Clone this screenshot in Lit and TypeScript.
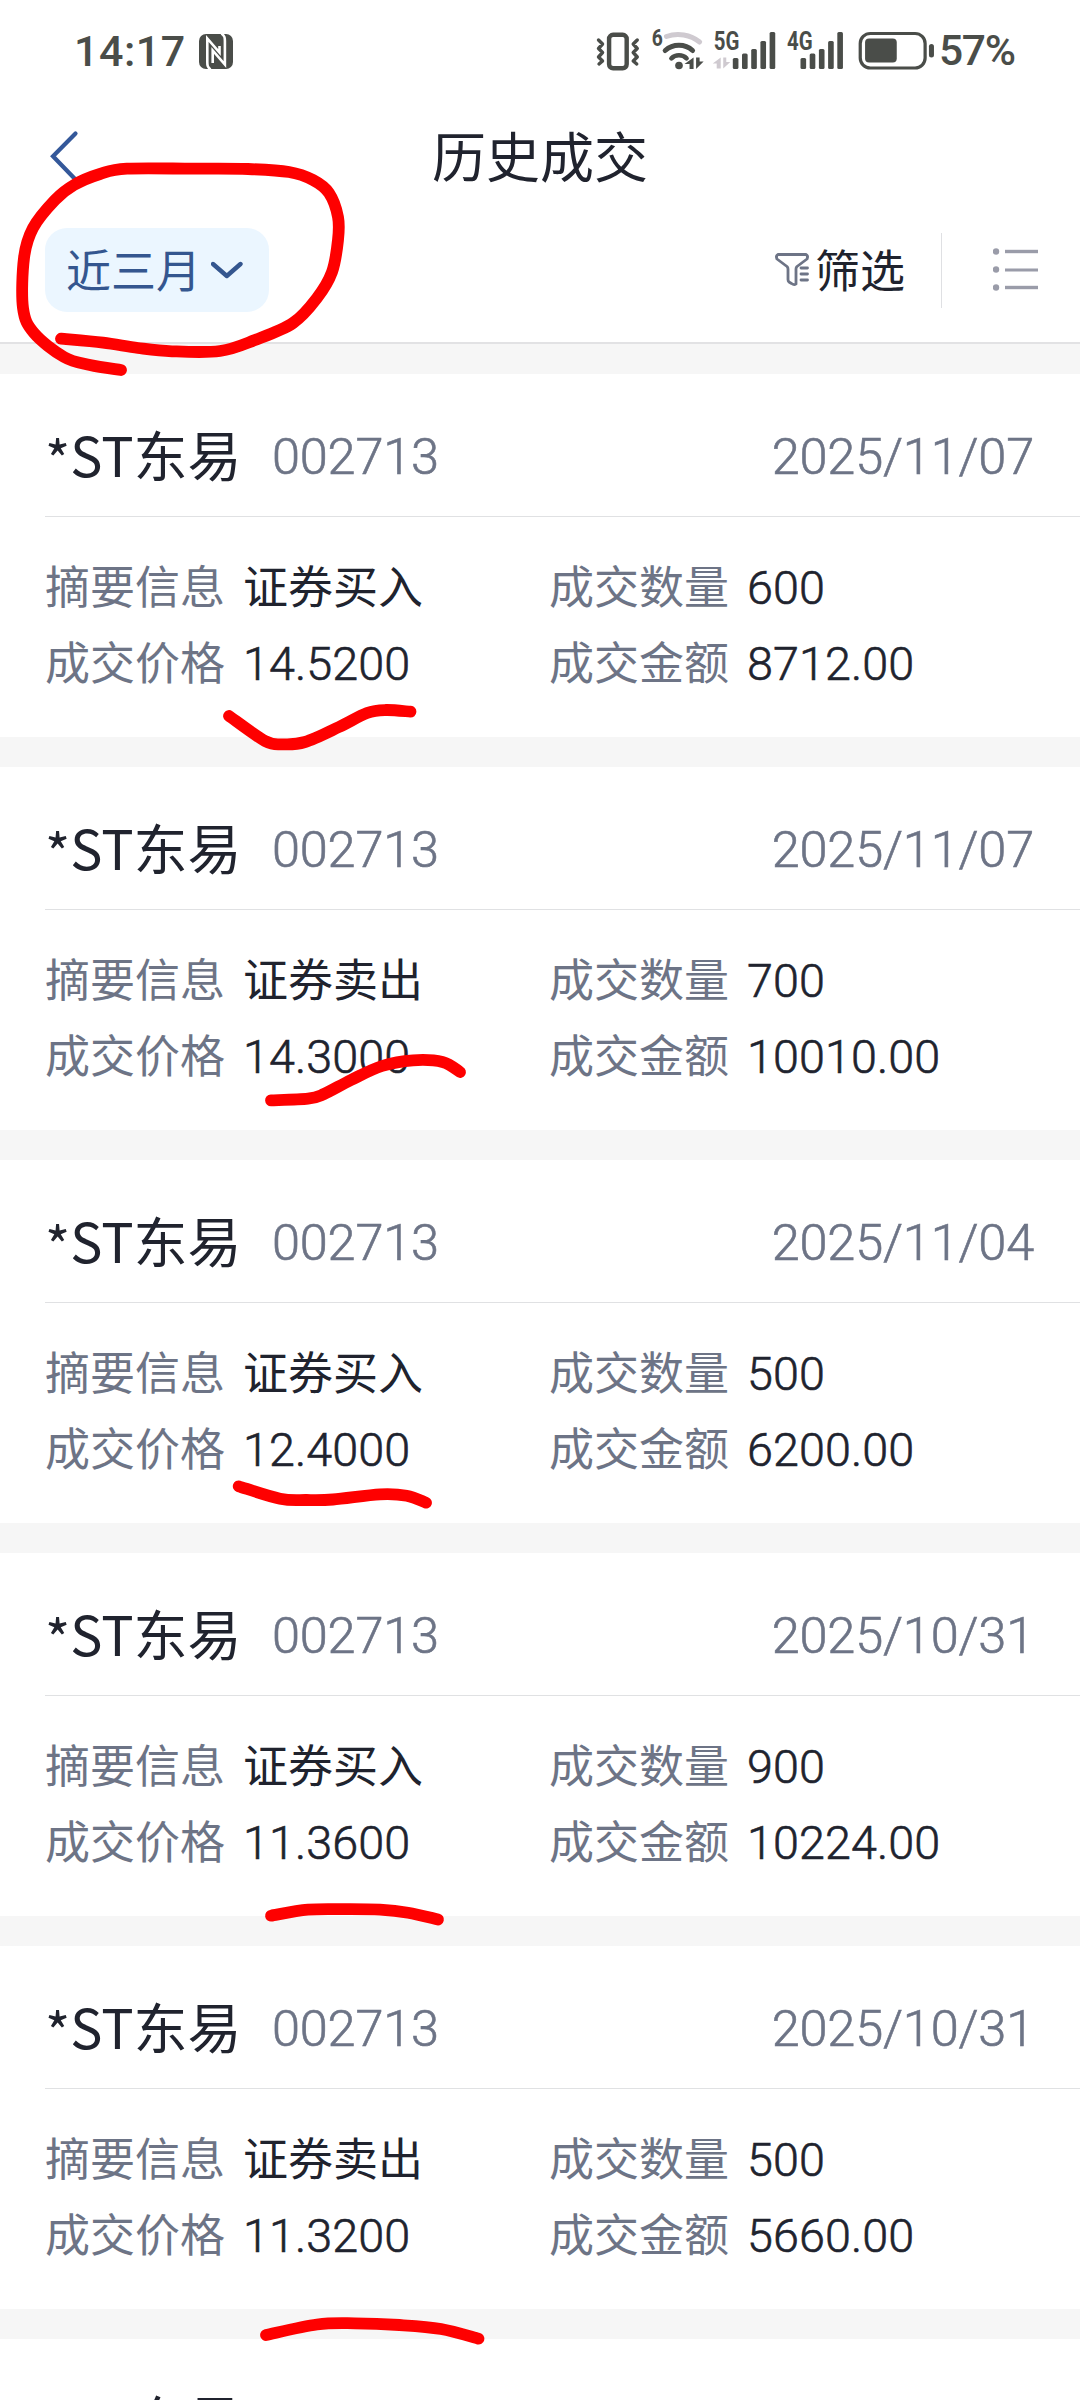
import { LitElement, html, css, svg, nothing } from "lit";
import { customElement, property } from "lit/decorators.js";

interface Trade {
  date: string;
  side: string;
  qty: string;
  price: string;
  amount: string;
}

const TRADES: Trade[] = [
  { date: "2025/11/07", side: "证券买入", qty: "600", price: "14.5200", amount: "8712.00" },
  { date: "2025/11/07", side: "证券卖出", qty: "700", price: "14.3000", amount: "10010.00" },
  { date: "2025/11/04", side: "证券买入", qty: "500", price: "12.4000", amount: "6200.00" },
  { date: "2025/10/31", side: "证券买入", qty: "900", price: "11.3600", amount: "10224.00" },
  { date: "2025/10/31", side: "证券卖出", qty: "500", price: "11.3200", amount: "5660.00" },
];

type Pt = [number, number];

const STROKES: Pt[][] = [
  [[61, 338.7], [103, 342.7], [138, 348], [172, 351.3], [220, 351], [255, 340], [293, 323], [317, 298], [332, 272], [338, 240], [338, 217], [329, 193], [313, 180], [289, 172], [248, 169], [193, 168.7], [127, 168.7], [100, 174], [74, 185], [55, 200], [33, 228], [24, 258], [23, 308], [34, 333], [64, 357], [90, 365], [121, 370]],
  [[229, 716], [265, 741], [283, 744.3], [305, 742], [339, 727], [367, 713], [386, 710], [410.5, 711.7]],
  [[271, 1100.3], [308, 1098.7], [324, 1094], [351, 1080], [382, 1066], [413, 1060.3], [442.5, 1062], [460, 1072]],
  [[238.7, 1486.3], [280, 1498.7], [306.7, 1500], [333, 1499.5], [380, 1494.3], [406.7, 1495.7], [426, 1502.7]],
  [[271, 1915.7], [308, 1909.7], [345, 1909.2], [380, 1909.7], [408, 1912.7], [438, 1919.5]],
  [[266, 2335], [317, 2324.5], [355, 2323.3], [399.5, 2325], [441, 2329], [478.5, 2338.7]],
];

/** Smooth curve through the points (Catmull-Rom converted to cubic Béziers). */
function smooth(p: Pt[]): string {
  let d = `M${p[0][0]} ${p[0][1]}`;
  for (let i = 0; i < p.length - 1; i++) {
    const a = p[Math.max(i - 1, 0)];
    const b = p[i];
    const c = p[i + 1];
    const e = p[Math.min(i + 2, p.length - 1)];
    d += `C${b[0] + (c[0] - a[0]) / 6} ${b[1] + (c[1] - a[1]) / 6} ${c[0] - (e[0] - b[0]) / 6} ${c[1] - (e[1] - b[1]) / 6} ${c[0]} ${c[1]}`;
  }
  return d;
}

@customElement("status-bar")
class StatusBar extends LitElement {
  static styles = css`
    :host {
      display: flex;
      justify-content: space-between;
      box-sizing: border-box;
      height: 102px;
      padding: 0 62px 0 74px;
      color: #4a4d49;
      font: 600 43px/102px Roboto, "Noto Sans", sans-serif;
    }
    .left,
    .right {
      display: flex;
    }
    .time {
      width: 125px;
      letter-spacing: 0.5px;
      font-weight: 500;
    }
    svg {
      display: block;
      fill: #4a4d49;
    }
    .ln {
      fill: none;
      stroke: #4a4d49;
    }
    .pale {
      fill: #cfcad0;
    }
    .lnpale {
      fill: none;
      stroke: #cfcad0;
    }
    .cut {
      fill: none;
      stroke: #fff;
    }
    .tag {
      font: 700 25px Roboto, sans-serif;
    }
    .gen {
      font: 700 23px Roboto, sans-serif;
    }
    .pct {
      width: 79px;
      font-size: 42.5px;
      font-weight: 500;
      letter-spacing: -1.3px;
    }
  `;

  private bars(x: number) {
    return [58, 53.5, 49, 41, 32].map(
      (top, i) => svg`<rect x=${x + i * 9.15} y=${top} width="5.6" height=${69 - top} rx="1.5"></rect>`,
    );
  }

  render() {
    return html`
      <div class="left">
        <span class="time">14:17</span>
        <svg width="35" height="102" viewBox="199 0 35 102">
          <rect x="199" y="34" width="34" height="35" rx="7"></rect>
          <path class="cut" stroke-width="2.6" d="M210.5 69.5C207.500 67 207.300 65.500 207.300 62V38.500L219.500 52.500V46" />
          <path class="cut" stroke-width="2.6" d="M221.500 33.500C224.700 36 224.900 37.500 224.900 41V64.500L212.700 50.500V63" />
        </svg>
      </div>
      <div class="right">
        <svg width="344" height="102" viewBox="595 0 342 102" preserveAspectRatio="none">
          <rect class="ln" x="609" y="34.800" width="17.500" height="33.500" rx="4" stroke-width="4.400"></rect>
          <path class="ln" stroke-width="3.400" stroke-linejoin="round" stroke-linecap="round" d="M598.500 40l4 4-4 4.500 4 4-4 4.500 4 4-3.500 3M637 40l-4 4 4 4.500-4 4 4 4.500-4 4 3.500 3" />
          <text class="gen" x="651.500" y="46.500" textLength="11" lengthAdjust="spacingAndGlyphs">6</text>
          <path class="lnpale" stroke-width="5" stroke-linecap="round" d="M666 36.500C677 32.500 690 34.500 699 42" />
          <path class="ln" stroke-width="5" stroke-linecap="round" d="M664.800 50.500C672.500 43.500 684.500 43.500 692 50.500" />
          <path class="ln" stroke-width="4.600" stroke-linecap="round" d="M671 58.300C675 54.300 682 54.300 686 58.300" />
          <circle cx="678.500" cy="65.500" r="3.800"></circle>
          <path d="M693 57.500v11.500h-4v-5h-5zM695.500 69V57.500h3.500v4h4z" />
          <text class="tag" x="713" y="50" textLength="25.500" lengthAdjust="spacingAndGlyphs">5G</text>
          <path class="pale" d="M720 57.500V68.500h-4v-5h-4zM722.500 68.500V57.500h3v4.500h4z" />
          ${this.bars(732)}
          <text class="tag" x="786" y="50" textLength="25.500" lengthAdjust="spacingAndGlyphs">4G</text>
          ${this.bars(799.300)}
          <rect class="ln" x="858.700" y="33.500" width="64.500" height="34.500" rx="10" stroke-width="3.200"></rect>
          <rect x="863.500" y="38.500" width="31.500" height="24" rx="4"></rect>
          <rect x="927" y="44" width="5" height="13.500" rx="2.500"></rect>
        </svg>
        <span class="pct">57%</span>
      </div>
    `;
  }
}

@customElement("trade-card")
class TradeCard extends LitElement {
  @property({ attribute: false }) trade?: Trade;

  static styles = css`
    :host {
      display: block;
      height: 363px;
      flex: none;
      background: #fff;
      color: #20232e;
      font-family: Roboto, "Noto Sans CJK SC", sans-serif;
    }
    .head {
      display: flex;
      align-items: center;
      box-sizing: border-box;
      height: 143px;
      margin-left: 45px;
      padding: 22px 46px 0 0;
      border-bottom: 1px solid #e0e1e3;
      line-height: 80px;
      white-space: nowrap;
    }
    .name {
      width: 227px;
      margin-top: -5px;
      font-family: "Noto Sans CJK SC", sans-serif;
      font-size: 54px;
    }
    .star {
      display: inline-block;
      line-height: 1;
      transform: translateY(4px);
    }
    .code,
    .date {
      padding-top: 1px;
      color: #6d7486;
      font-size: 50.5px;
      font-weight: 350;
      letter-spacing: -0.2px;
      -webkit-text-stroke: 0.6px currentColor;
    }
    .date {
      margin-left: auto;
    }
    .grid {
      display: grid;
      grid-template-columns: 504px 1fr;
      grid-auto-rows: 76px;
      padding: 33px 0 0 45px;
    }
    .cell {
      display: flex;
      line-height: 76px;
      white-space: nowrap;
    }
    .num {
      font-size: 46.7px;
      font-weight: 350;
      letter-spacing: 0.1px;
      -webkit-text-stroke: 0.6px currentColor;
    }
    .label,
    .cjk {
      padding-top: 1px;
      font-size: 45px;
    }
    .label {
      width: 198px;
      color: #6d7486;
    }
  `;

  render() {
    const t = this.trade;
    return html`
      <div class="head">
        <span class="name"><span class="star">*</span>ST东易</span>
        ${t ? html`<span class="code">002713</span><span class="date">${t.date}</span>` : nothing}
      </div>
      ${t
        ? html`<div class="grid">
            <div class="cell"><span class="label">摘要信息</span><span class="cjk">${t.side}</span></div>
            <div class="cell"><span class="label">成交数量</span><span class="num">${t.qty}</span></div>
            <div class="cell"><span class="label">成交价格</span><span class="num">${t.price}</span></div>
            <div class="cell"><span class="label">成交金额</span><span class="num">${t.amount}</span></div>
          </div>`
        : nothing}
    `;
  }
}

@customElement("app-root")
class AppRoot extends LitElement {
  static styles = css`
    :host {
      display: block;
      position: relative;
      width: 1080px;
      height: 2400px;
      overflow: hidden;
      background: #f6f6f6;
      color: #20232e;
      font-family: "Noto Sans CJK SC", sans-serif;
    }
    .top {
      height: 342px;
      background: #fff;
      border-bottom: 2px solid #e2e2e4;
    }
    svg {
      display: block;
    }
    .nav {
      display: grid;
      grid-template-columns: 1fr auto 1fr;
      align-items: center;
      height: 108px;
      padding: 0 45px;
      font-size: 54px;
      line-height: 106px;
    }
    .title {
      height: 108px;
    }
    .tools {
      display: flex;
      align-items: center;
      height: 84px;
      margin-top: 18px;
      padding: 0 41px 0 45px;
      font-size: 45px;
      line-height: 81px;
    }
    .word {
      height: 84px;
    }
    .chip {
      display: flex;
      align-items: center;
      gap: 10px;
      box-sizing: border-box;
      width: 224px;
      height: 84px;
      margin-right: auto;
      padding-left: 21px;
      border-radius: 22px;
      background: #ebf6ff;
      color: #34568f;
    }
    .filter {
      display: flex;
      align-items: center;
      gap: 5px;
    }
    .sep {
      width: 1px;
      height: 75px;
      margin: 0 51px 0 36px;
      background: #dfe0e3;
    }
    .list {
      display: flex;
      flex-direction: column;
      gap: 30px;
      padding-top: 30px;
    }
    .ink {
      position: absolute;
      inset: 0;
      fill: none;
      stroke: #fe0000;
      stroke-width: 11.8;
      stroke-linecap: round;
      stroke-linejoin: round;
      pointer-events: none;
    }
  `;

  render() {
    return html`
      <div class="top">
        <status-bar></status-bar>
        <div class="nav">
          <svg width="36" height="56" viewBox="45 128 36 56" fill="none" stroke="#34589a" stroke-width="4.200" stroke-linecap="round">
            <path d="M75.500 133.500L53 156.300L75.500 179.500" />
          </svg>
          <span class="title">历史成交</span>
          <span></span>
        </div>
        <div class="tools">
          <div class="chip">
            <span class="word">近三月</span>
            <svg width="32" height="18" viewBox="211 260.500 32 18" fill="none" stroke="#34568f" stroke-width="4.400" stroke-linecap="round" stroke-linejoin="round">
              <path d="M213 263.500L226.800 275.500L240.500 263.500" />
            </svg>
          </div>
          <div class="filter">
            <svg width="36" height="36" viewBox="773 252 36 36" fill="none" stroke="#6d7486" stroke-width="2.800" stroke-linejoin="round" stroke-linecap="round">
              <path d="M777 254.500H805Q807.500 256 806 259L796 266.500Q795 267.500 795 269V284Q793 285.500 790.500 283.500L788 282Q787 281 787 279.500V269Q787 267.500 786 266.500L776 259Q774.500 256 777 254.500Z" />
              <path d="M800 268H806.500M800 274H806.500M800 280H806.500" />
            </svg>
            <span class="word">筛选</span>
          </div>
          <div class="sep"></div>
          <svg width="46" height="46" viewBox="993 247 46 46" fill="#9a9ca9">
            <circle cx="996" cy="251.500" r="3.200"></circle>
            <circle cx="996" cy="269.500" r="3.200"></circle>
            <circle cx="996" cy="287.500" r="3.200"></circle>
            <rect x="1005" y="249.800" width="33" height="3.400"></rect>
            <rect x="1005" y="268.500" width="33" height="3"></rect>
            <rect x="1005" y="285.800" width="33" height="3.400"></rect>
          </svg>
        </div>
      </div>
      <div class="list">
        ${TRADES.map((t) => html`<trade-card .trade=${t}></trade-card>`)}
        <trade-card></trade-card>
      </div>
      <svg class="ink" width="1080" height="2400" viewBox="0 0 1080 2400">
        ${STROKES.map((s) => svg`<path d=${smooth(s)}></path>`)}
      </svg>
    `;
  }
}
